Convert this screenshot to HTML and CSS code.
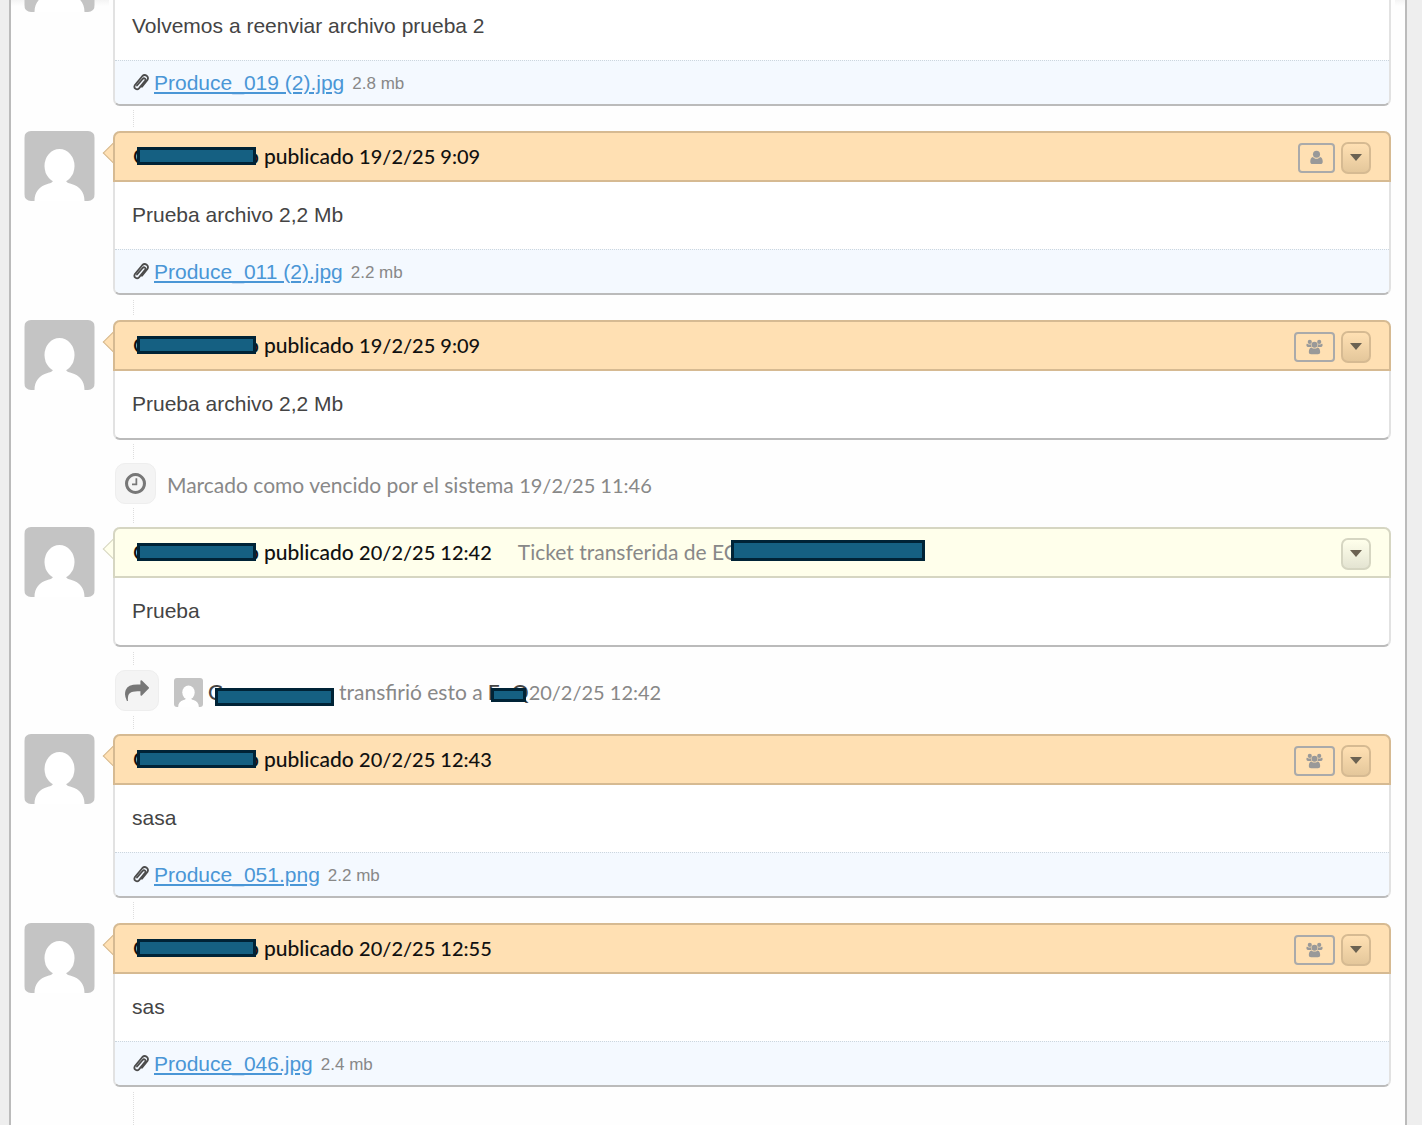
FILE: index.html
```html
<!DOCTYPE html>
<html lang="es">
<head>
<meta charset="utf-8">
<title>Hilo del ticket</title>
<link rel="stylesheet" href="styles.css">
</head>
<body>
<svg class="defs" aria-hidden="true">
  <symbol id="avatar" viewBox="0 0 70 70">
    <rect width="70" height="70" fill="#c4c4c4"/>
    <ellipse cx="35" cy="35" rx="15" ry="17" fill="#fff"/>
    <path d="M29 47h12c0 4 2 5 6 6 8 2 13 8 13 17H10c0-9 5-15 13-17 4-1 6-2 6-6z" fill="#fff"/>
  </symbol>
  <symbol id="clip" viewBox="0 0 18 20">
    <path d="M5 12.500 10.600 6c1.600-1.700 3.900 0 2.500 1.900L7 15.300c-2 2.200-5.800.2-4.200-3L10.400 3c2.700-2.600 7 .6 5 4L10 13.800" fill="none" stroke="#4c4c4c" stroke-width="1.800" stroke-linecap="round"/>
  </symbol>
  <symbol id="clock" viewBox="128 128 1536 1536">
    <path d="M1024 544v448q0 14-9 23t-23 9h-320q-14 0-23-9t-9-23v-64q0-14 9-23t23-9h224v-352q0-14 9-23t23-9h64q14 0 23 9t9 23zm416 352q0-148-73-273t-198-198-273-73-273 73-198 198-73 273 73 273 198 198 273 73 273-73 198-198 73-273zm224 0q0 209-103 385.500t-279.500 279.500-385.500 103-385.500-103-279.500-279.500-103-385.500 103-385.500 279.500-279.500 385.500-103 385.500 103 279.500 279.500 103 385.500z" fill="currentColor"/>
  </symbol>
  <symbol id="share" viewBox="0 64 1792 1536">
    <path d="M1792 640q0 26-19 45l-512 512q-19 19-45 19t-45-19-19-45v-256h-224q-98 0-175.500 6t-154 21.500-133 42.500-105.500 69.500-80 101-48.500 138.500-17.500 181q0 55 5 123 0 6 2.500 23.500t2.500 26.500q0 15-8.500 25t-23.500 10q-16 0-28-17-7-9-13-22t-13.500-30-10.500-24q-127-285-127-451 0-199 53-333 162-403 875-403h224v-256q0-26 19-45t45-19 45 19l512 512q19 19 19 45z" fill="currentColor"/>
  </symbol>
  <symbol id="user" viewBox="0 0 14 16">
    <circle cx="7" cy="4.500" r="3.800" fill="currentColor"/>
    <path d="M3.200 7.500C4 8.700 5.400 9.400 7 9.400s3-.7 3.800-1.900c2 .3 2.900 2.500 2.900 5 0 1.500-.9 2.500-2.400 2.500H2.700C1.200 15 .3 14 .3 12.500c0-2.500.9-4.700 2.900-5z" fill="currentColor"/>
  </symbol>
  <symbol id="group" viewBox="0 0 18 16">
    <g fill="currentColor">
      <circle cx="4" cy="2.600" r="2.200"/><circle cx="14" cy="2.600" r="2.200"/>
      <path d="M1 4.300c1.500 1.500 3.200 1.200 4.200.8 0 1.200.2 2 .8 2.800H2C.2 7.900 0 5.500 1 4.300zM17 4.300c-1.500 1.500-3.200 1.200-4.200.8 0 1.200-.2 2-.8 2.800h4c1.800 0 2-2.400 1-3.600z"/>
      <circle cx="9" cy="5.600" r="3.200"/>
      <path d="M5.800 8.400c1.900 1.700 4.500 1.700 6.400 0 2 .3 2.800 2.400 2.800 4.800 0 1.500-.9 2.400-2.300 2.400H5.300C3.900 15.600 3 14.700 3 13.200c0-2.400.8-4.500 2.800-4.800z"/>
    </g>
  </symbol>
</svg>

<main class="page">
  <div class="thread">

    <article class="entry">
      <svg class="avatar"><use href="#avatar"/></svg>
      <div class="card">
        <header class="head"></header>
        <p class="body">Volvemos a reenviar archivo prueba 2</p>
        <footer class="files"><svg class="clip"><use href="#clip"/></svg><a href="#">Produce_019 (2).jpg</a><small>2.8 mb</small></footer>
      </div>
    </article>

    <article class="entry">
      <svg class="avatar"><use href="#avatar"/></svg>
      <div class="card">
        <header class="head">
          <b class="name"><span>G</span><span>o</span></b><span>publicado <time>19/2/25 9:09</time></span>
          <span class="tools"><span class="badge"><svg class="ico-user"><use href="#user"/></svg></span><button class="more" type="button" aria-label="Más"></button></span>
        </header>
        <p class="body">Prueba archivo 2,2 Mb</p>
        <footer class="files"><svg class="clip"><use href="#clip"/></svg><a href="#">Produce_011 (2).jpg</a><small>2.2 mb</small></footer>
      </div>
    </article>

    <article class="entry">
      <svg class="avatar"><use href="#avatar"/></svg>
      <div class="card">
        <header class="head">
          <b class="name"><span>G</span><span>o</span></b><span>publicado <time>19/2/25 9:09</time></span>
          <span class="tools"><span class="badge"><svg class="ico-group"><use href="#group"/></svg></span><button class="more" type="button" aria-label="Más"></button></span>
        </header>
        <p class="body">Prueba archivo 2,2 Mb</p>
      </div>
    </article>

    <div class="event">
      <span class="mark"><svg class="ico-clock"><use href="#clock"/></svg></span>
      <span class="note">Marcado como vencido por el sistema <time>19/2/25 11:46</time></span>
    </div>

    <article class="entry">
      <svg class="avatar"><use href="#avatar"/></svg>
      <div class="card reply">
        <header class="head">
          <b class="name"><span>G</span><span>o</span></b><span>publicado <time>20/2/25 12:42</time></span>
          <span class="origin">Ticket transferida de EC<i class="cover"></i></span>
          <span class="tools"><button class="more" type="button" aria-label="Más"></button></span>
        </header>
        <p class="body">Prueba</p>
      </div>
    </article>

    <div class="event">
      <span class="mark"><svg class="ico-share"><use href="#share"/></svg></span>
      <span class="note with-face"><svg class="face"><use href="#avatar"/></svg><b class="name low"><span>G</span><span>o</span></b><span>transfirió esto a</span><b class="dept"><span>E</span><span>Q</span></b><time>20/2/25 12:42</time></span>
    </div>

    <article class="entry">
      <svg class="avatar"><use href="#avatar"/></svg>
      <div class="card">
        <header class="head">
          <b class="name"><span>G</span><span>o</span></b><span>publicado <time>20/2/25 12:43</time></span>
          <span class="tools"><span class="badge"><svg class="ico-group"><use href="#group"/></svg></span><button class="more" type="button" aria-label="Más"></button></span>
        </header>
        <p class="body">sasa</p>
        <footer class="files"><svg class="clip"><use href="#clip"/></svg><a href="#">Produce_051.png</a><small>2.2 mb</small></footer>
      </div>
    </article>

    <article class="entry">
      <svg class="avatar"><use href="#avatar"/></svg>
      <div class="card">
        <header class="head">
          <b class="name"><span>G</span><span>o</span></b><span>publicado <time>20/2/25 12:55</time></span>
          <span class="tools"><span class="badge"><svg class="ico-group"><use href="#group"/></svg></span><button class="more" type="button" aria-label="Más"></button></span>
        </header>
        <p class="body">sas</p>
        <footer class="files"><svg class="clip"><use href="#clip"/></svg><a href="#">Produce_046.jpg</a><small>2.4 mb</small></footer>
      </div>
    </article>

  </div>
</main>
</body>
</html>
```

FILE: styles.css
```css
*,
*::before,
*::after {
  box-sizing: border-box;
}

body {
  margin: 0;
  background: #eee;
  color: #444;
  font: 21px/26px "Liberation Sans", Arial, sans-serif;
}

.defs {
  position: absolute;
  width: 0;
  height: 0;
}

.page {
  margin: 0 15px 0 9px;
  padding: 0 14px 0 13px;
  overflow: hidden;
  background: linear-gradient(#f4f4f4, #fefefe 6px);
  border: solid #bbb;
  border-width: 0 2px;
}

/* the thread is scrolled so that the first entry is cut by the window */
.thread {
  position: relative;
  margin-top: -58px;
  padding-bottom: 38px;
  isolation: isolate;
}

.thread::before {
  content: "";
  position: absolute;
  z-index: -1;
  top: 0;
  bottom: 0;
  left: 109px;
  border-left: 1px dotted #ddd;
}

time {
  font-size: 20px;
}

.entry {
  display: flex;
  align-items: flex-start;
  gap: 18px;
}

.entry + .entry {
  margin-top: 25px;
}

.avatar {
  flex: none;
  width: 71px;
  height: 70px;
  border-radius: 7px;
}

.card {
  --tint: #ffe0b3;
  --edge: #d6ba92;
  --shade: #e4c79b;
  position: relative;
  flex: 1;
  background: #fff;
  border: solid #e2e2e2;
  border-width: 0 2px 2px 2px;
  border-bottom-color: #bbb;
  border-radius: 7px;
  box-shadow: 0 0 0 4px #fefefe;
}

.reply {
  --tint: #ffffeb;
  --edge: #d6d6c2;
  --shade: #e4e4d2;
}

.card::before {
  content: "";
  position: absolute;
  top: 14px;
  left: -9px;
  width: 16px;
  height: 16px;
  background: var(--tint);
  border: solid var(--edge);
  border-width: 0 0 1px 1px;
  transform: rotate(45deg);
}

.head {
  position: relative;
  display: flex;
  align-items: center;
  height: 51px;
  margin: 0 -2px;
  padding: 0 18px 2px;
  background: var(--tint);
  border: 2px solid var(--edge);
  border-radius: 7px 7px 0 0;
  color: #111;
  font-family: Lato, sans-serif;
  font-weight: 500;
}

.name,
.dept {
  position: relative;
  display: inline-flex;
  justify-content: space-between;
  flex: none;
  font-weight: 500;
}

.name {
  width: 126px;
  margin-right: 5px;
}

.name::after,
.dept::after,
.cover {
  position: absolute;
  background: #156082;
  border: 3px solid #002336;
}

.name::after {
  content: "";
  top: 4px;
  left: 4px;
  width: 119px;
  height: 18px;
}

.low {
  color: #444;
}

.low::after {
  top: 9px;
  left: 7px;
}

.origin {
  position: relative;
  margin-left: 26px;
  color: #888;
  font-weight: 400;
}

.cover {
  top: 1px;
  left: 213px;
  width: 194px;
  height: 21px;
}

.tools {
  display: flex;
  align-items: center;
  gap: 6px;
  margin-left: auto;
  padding-top: 4px;
}

.badge {
  display: flex;
  align-items: center;
  padding: 0 10px;
  height: 30px;
  border: 2px solid #aaa;
  border-radius: 4px;
  color: #999;
}

.ico-user {
  width: 13px;
  height: 15px;
}

.ico-group {
  width: 17px;
  height: 16px;
}

.more {
  display: flex;
  align-items: center;
  justify-content: center;
  width: 30px;
  height: 32px;
  padding: 0;
  background: linear-gradient(var(--tint), var(--shade));
  border: 2px solid var(--edge);
  border-radius: 7px;
}

.more::before {
  content: "";
  border: solid transparent;
  border-width: 7px 6px 0;
  border-top-color: #6b6252;
}

.body {
  height: 67px;
  margin: 0;
  padding: 20px 17px 21px;
}

.files {
  display: flex;
  align-items: center;
  height: 44px;
  padding: 0 17px;
  background: #f4f9ff;
  border-top: 1px dotted #ccd6de;
  border-radius: 0 0 5px 5px;
}

.clip {
  width: 18px;
  height: 20px;
  margin-right: 4px;
}

.files a {
  color: #4a96d6;
}

.files small {
  margin-left: 8px;
  padding-top: 2px;
  color: #888;
  font-size: 17px;
}

.event {
  display: flex;
  align-items: center;
  gap: 11px;
  height: 87px;
  padding: 0 0 1px 91px;
  color: #888;
  font-family: Lato, sans-serif;
}

.mark {
  display: flex;
  align-items: center;
  justify-content: center;
  height: 41px;
  padding: 0 9px;
  background: #f4f4f4;
  border: 1px solid #eee;
  border-radius: 10px;
  box-shadow: 0 0 0 4px #fefefe;
  color: #777;
}

.ico-clock {
  width: 21px;
  height: 21px;
}

.ico-share {
  width: 24px;
  height: 21px;
}

.note {
  padding-top: 4px;
}

.with-face {
  display: flex;
  align-items: center;
  padding-left: 4px;
}

.face {
  width: 29px;
  height: 29px;
  margin-right: 5px;
  border-radius: 3px;
}

.dept {
  width: 41px;
  margin-left: 5px;
  color: #444;
}

.dept::after {
  content: "";
  top: 9px;
  left: 3px;
  width: 35px;
  height: 14px;
}
```
